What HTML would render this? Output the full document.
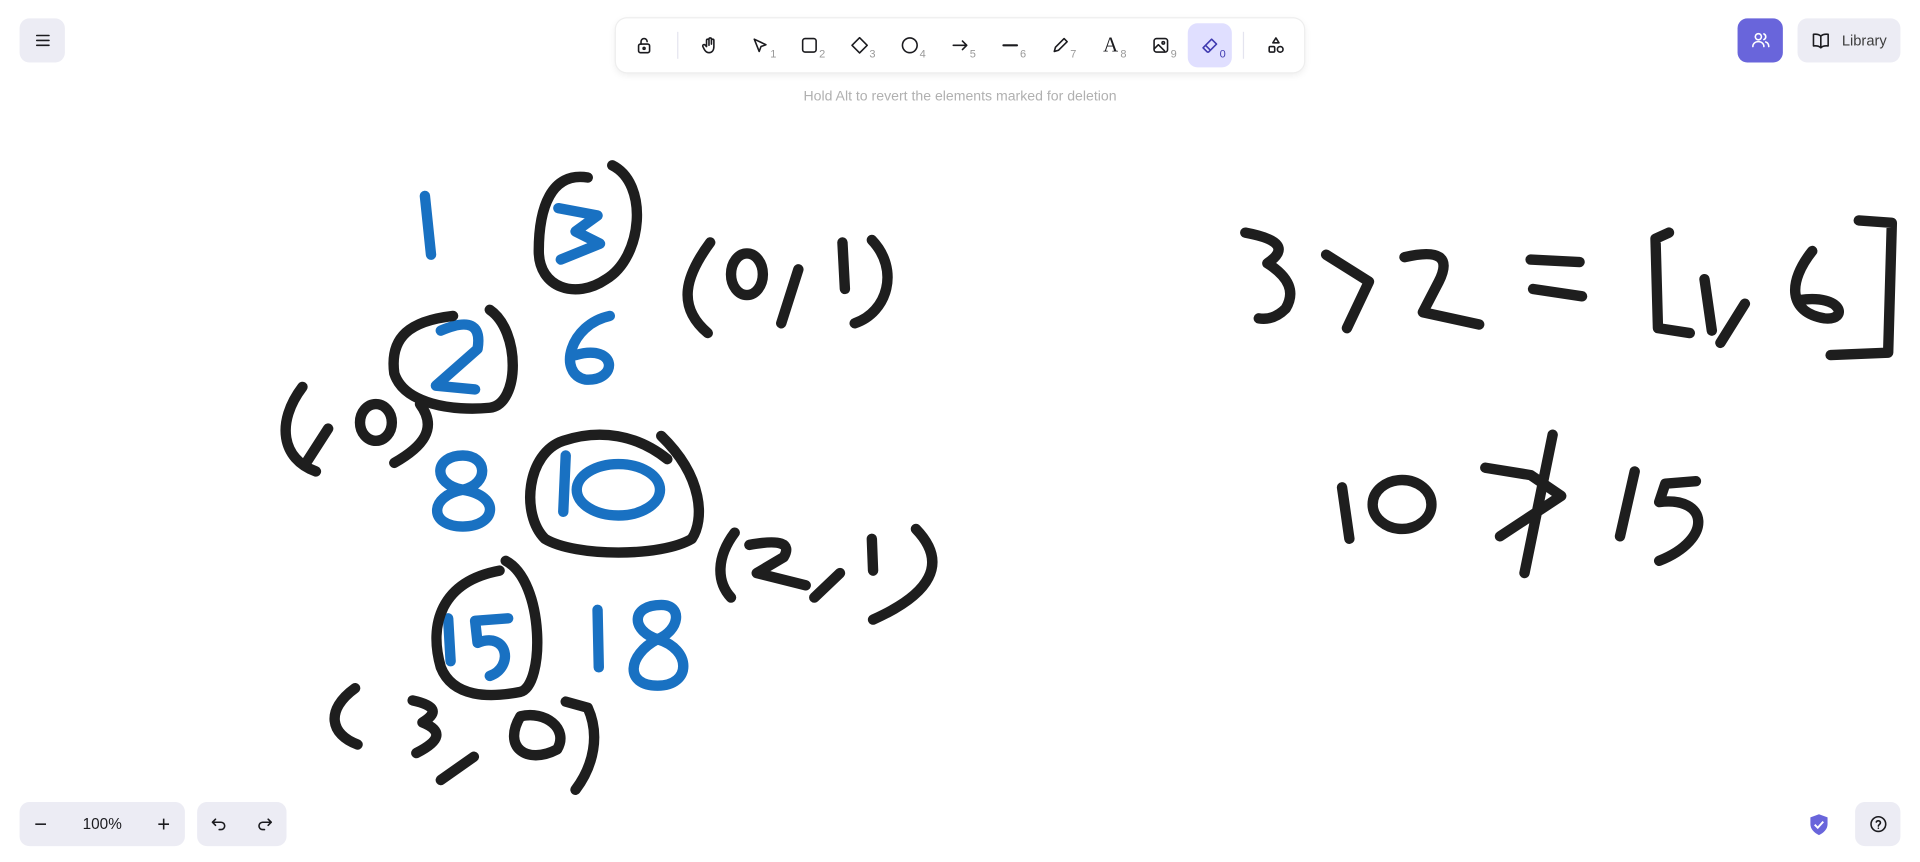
<!DOCTYPE html>
<html><head><meta charset="utf-8"><style>
html,body{margin:0;padding:0;background:#fff;overflow:hidden;width:1920px;height:862px}
#w{position:absolute;left:0;top:0;width:1568px;height:704px;transform:scale(1.22449);transform-origin:0 0;font-family:"Liberation Sans",sans-serif}
.btn{position:absolute;background:#ececf4;border-radius:8px;display:flex;align-items:center;justify-content:center}
.tb{position:absolute;left:503px;top:15px;width:562px;height:44px;background:#fff;border-radius:9px;box-shadow:0 0 0 1px #eee,0 2px 6px rgba(0,0,0,.08)}
.ic{position:absolute;top:0;height:44px;width:36px;display:flex;align-items:center;justify-content:center}
.ic sub{position:absolute;left:26px;top:24px;font-size:9px;color:#999}
svg.i{width:16px;height:16px;fill:none;stroke:#1b1b1f;stroke-width:1.3;stroke-linecap:round;stroke-linejoin:round}
</style></head><body><div id="w">
<div class="btn" style="left:16px;top:15px;width:37px;height:36px"><svg class="i" viewBox="0 0 16 16"><path d="M3 4h10M3 8h10M3 12h10"/></svg></div>
<div class="tb">
<div class="ic" style="left:5px"><svg class="i" viewBox="0 0 16 16"><rect x="3.5" y="7" width="9" height="7" rx="1.5"/><path d="M5.5 7V5a2.5 2.5 0 0 1 5 0"/><circle cx="8" cy="10.5" r=".8"/></svg></div>
<div style="position:absolute;left:50px;top:11px;width:1px;height:22px;background:#e4e4ef"></div>
<div class="ic" style="left:59px"><svg class="i" viewBox="0 0 16 16"><path d="M5 9V4a1 1 0 0 1 2 0v4M7 7V3a1 1 0 0 1 2 0v4M9 7V4a1 1 0 0 1 2 0v5c0 3-1.5 5-4 5-2 0-3-1-4-3L2 9a1 1 0 0 1 2-1l1 1"/></svg></div>
<div class="ic" style="left:100px"><svg class="i" viewBox="0 0 16 16"><path d="M3 3l4 10 1.5-4 4-1.5z"/></svg><sub>1</sub></div>
<div class="ic" style="left:140px"><svg class="i" viewBox="0 0 16 16"><rect x="2.5" y="2.5" width="11" height="11" rx="2"/></svg><sub>2</sub></div>
<div class="ic" style="left:181px"><svg class="i" viewBox="0 0 16 16"><path d="M8 1.8l6.2 6.2L8 14.2 1.8 8z"/></svg><sub>3</sub></div>
<div class="ic" style="left:222px"><svg class="i" viewBox="0 0 16 16"><circle cx="8" cy="8" r="6"/></svg><sub>4</sub></div>
<div class="ic" style="left:263px"><svg class="i" viewBox="0 0 16 16"><path d="M2.5 8h11M10 4.5L13.5 8 10 11.5"/></svg><sub>5</sub></div>
<div class="ic" style="left:304px"><svg class="i" viewBox="0 0 16 16"><path d="M2.5 8h11" stroke-width="1.8"/></svg><sub>6</sub></div>
<div class="ic" style="left:345px"><svg class="i" viewBox="0 0 16 16"><path d="M3 13l1-3.5L11 2.5l2.5 2.5L6.5 12z"/></svg><sub>7</sub></div>
<div class="ic" style="left:386px"><span style="font-family:'Liberation Serif',serif;font-size:17px;color:#1b1b1f">A</span><sub>8</sub></div>
<div class="ic" style="left:427px"><svg class="i" viewBox="0 0 16 16"><rect x="2.5" y="2.5" width="11" height="11" rx="2"/><circle cx="10" cy="6" r="1"/><path d="M2.5 11l3.5-3.5 5 5"/></svg><sub>9</sub></div>
<div class="ic" style="left:467px;top:4px;height:36px;background:#e0dfff;border-radius:8px"><svg class="i" viewBox="0 0 16 16" style="stroke:#3f3ab0"><path d="M6 13.5L2.5 10l7-7 4 4-6.5 6.5zM4.5 8l4 4"/></svg><sub style="top:20px;color:#3f3ab0">0</sub></div>
<div style="position:absolute;left:512px;top:11px;width:1px;height:22px;background:#e4e4ef"></div>
<div class="ic" style="left:521px"><svg class="i" viewBox="0 0 16 16"><path d="M8 2l2.5 4h-5z"/><rect x="2.5" y="9" width="4.5" height="4.5" rx="1"/><circle cx="11.5" cy="11.3" r="2.3"/></svg></div>
</div>
<div style="position:absolute;left:0;width:1568px;top:73px;text-align:center;font-size:11.5px;color:#b0b0b0">Hold Alt to revert the elements marked for deletion</div>
<div class="btn" style="left:1419px;top:15px;width:37px;height:36px;background:#6965db"><svg class="i" viewBox="0 0 16 16" style="stroke:#fff"><circle cx="6" cy="5" r="2.5"/><path d="M1.5 13c0-2.5 2-4 4.5-4s4.5 1.5 4.5 4M10.5 2.7a2.5 2.5 0 0 1 0 4.6M12 9.3c1.5.5 2.5 2 2.5 3.7"/></svg></div>
<div class="btn" style="left:1468px;top:15px;width:84px;height:36px;font-size:12px;color:#3d3d3d"><svg class="i" viewBox="0 0 16 16" style="margin-right:9px"><path d="M8 4.5C6.5 3 4 2.8 2 3v9.5c2-.2 4.5 0 6 1.5 1.5-1.5 4-1.7 6-1.5V3c-2-.2-4.5 0-6 1.5zM8 4.5V14"/></svg>Library</div>
<div class="btn" style="left:16px;top:655px;width:135px;height:36px;font-size:12.5px;color:#1b1b1f;justify-content:space-between;padding:0 12px;box-sizing:border-box"><span style="font-size:18px">−</span><span>100%</span><span style="font-size:18px">+</span></div>
<div class="btn" style="left:161px;top:655px;width:73px;height:36px;justify-content:space-around"><svg class="i" viewBox="0 0 16 16"><path d="M5 4L2.5 6.5 5 9M2.5 6.5h7a3 3 0 0 1 0 6H8"/></svg><svg class="i" viewBox="0 0 16 16"><path d="M11 4l2.5 2.5L11 9M13.5 6.5h-7a3 3 0 0 0 0 6H8"/></svg></div>
<svg style="position:absolute;left:1477px;top:664px" width="17" height="19" viewBox="0 0 17 19"><path d="M8.5 1L15.5 3.5V9c0 4-3 7-7 9-4-2-7-5-7-9V3.5z" fill="#6965db"/><path d="M5 9.5l2.5 2.5 4.5-5" stroke="#fff" stroke-width="1.6" fill="none"/></svg>
<div class="btn" style="left:1515px;top:655px;width:37px;height:36px"><svg class="i" viewBox="0 0 16 16"><circle cx="8" cy="8" r="6"/><path d="M6.3 6.3a1.8 1.8 0 0 1 3.4.7c0 1.2-1.7 1.4-1.7 2.6M8 11.3v.1"/></svg></div>
<svg style="position:absolute;left:0;top:0" width="1568" height="704" viewBox="0 0 1568 704" fill="none" stroke-linecap="round" stroke-linejoin="round">
<g stroke="#1971c2" stroke-width="8.5">
<path d="M347 160L352 208"/>
<path d="M456 170L488 176 470 189 490 199 458 212"/>
<path d="M360 270Q395 255 390 285L356 315 388 318"/>
<path d="M498 258C465 265 455 305 478 310 505 312 505 280 470 290"/>
<path d="M378 372C355 372 352 395 378 400 410 405 405 430 378 430 350 430 350 405 378 400 400 395 398 372 378 372"/>
<path d="M462 372L460 418"/><ellipse cx="505" cy="400" rx="34" ry="21"/>
<path d="M366 505L368 540M415 505L388 507 390 525C415 515 420 545 400 552"/>
<path d="M488 498L489 545"/>
<path d="M540 494C515 494 515 515 537 522 565 530 565 560 537 560 510 560 512 535 537 522 555 515 558 494 540 494"/>
</g>
<g stroke="#1e1e1e" stroke-width="8.5">
<path d="M500 135C530 150 525 210 495 228 470 245 440 235 440 205 440 170 450 140 480 145"/>
<path d="M580 198C560 225 552 250 578 272"/><ellipse cx="610" cy="224" rx="13" ry="17"/>
<path d="M652 220L638 264M688 198L690 236M712 196C735 220 725 255 698 264"/>
<path d="M400 253C425 270 425 330 400 333 370 336 330 330 322 305 318 275 335 262 370 258"/>
<path d="M247 316C225 345 230 375 258 385"/><ellipse cx="307" cy="345" rx="13" ry="15"/>
<path d="M268 350L250 378M343 330C358 350 345 365 322 378"/>
<path d="M540 356C575 390 575 425 565 440 540 455 470 455 445 440 425 420 430 370 460 360 490 350 520 355 545 375"/>
<path d="M600 435C585 455 585 475 597 488M612 445Q650 438 640 455L618 468 658 478M686 468L665 488M712 440L713 466M748 432C775 460 760 485 713 506"/>
<path d="M413 458C445 475 445 560 425 565 400 570 370 570 360 545 350 510 360 475 408 466"/>
<path d="M290 562C265 580 270 600 292 608M337 572Q365 578 345 590Q370 600 340 615M387 618L360 637M425 585C410 610 430 625 455 612 465 595 445 580 425 585M462 573L480 578C490 600 485 625 470 645"/>
<path d="M1017 190Q1060 198 1035 215Q1062 232 1050 252Q1040 262 1028 260M1083 208L1118 230 1100 268M1147 210Q1190 200 1175 230L1162 255 1208 265M1250 212L1290 214M1252 236L1292 242M1363 190L1352 195 1354 268 1380 272M1392 228L1398 270M1425 248L1405 280M1480 205C1460 230 1460 255 1490 260 1510 262 1505 240 1470 245M1518 180L1545 182 1542 288 1495 290"/>
<path d="M1096 398L1102 440"/><ellipse cx="1145" cy="412" rx="24" ry="20"/>
<path d="M1213 382L1250 388 1275 405 1225 438M1268 355L1245 468M1335 385L1323 438M1385 393L1360 395 1355 410C1395 405 1400 440 1355 458"/>
</g></svg>
</div></body></html>
